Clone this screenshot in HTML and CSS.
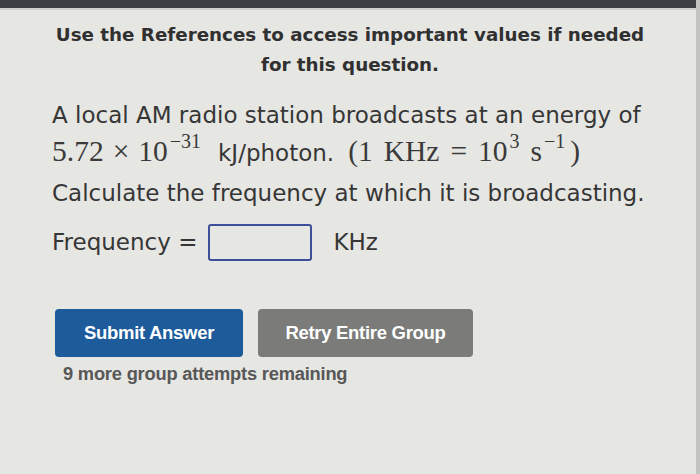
FILE: index.html
```html
<!DOCTYPE html>
<html>
<head>
<meta charset="utf-8">
<link rel="stylesheet" href="styles.css">
</head>
<body>
<div class="topbar"></div>
<div class="page">
  <div class="refs">Use the References to access important values if needed<br>for this question.</div>
  <div class="q">
    <p class="line">A local AM radio station broadcasts at an energy of</p>
    <p class="line mline"><span class="m">5.72<span class="op">×</span>10<sup>−31</sup></span><span class="sans">kJ/photon.</span><span class="m paren">(1<span class="sp"></span>KHz<span class="op">=</span>10<sup>3</sup><span class="sp"></span>s<sup>−1</sup><span class="sp2"></span>)</span></p>
    <p class="line calc">Calculate the frequency at which it is broadcasting.</p>
    <div class="answer">
      <span>Frequency =</span>
      <span class="box"></span>
      <span class="unit">KHz</span>
    </div>
  </div>
  <div class="buttons">
    <div class="btn submit">Submit Answer</div>
    <div class="btn retry">Retry Entire Group</div>
  </div>
  <div class="remaining">9 more group attempts remaining</div>
</div>
</body>
</html>
```
FILE: styles.css
```css
html, body {
  margin: 0;
  padding: 0;
}
body {
  width: 700px;
  height: 474px;
  overflow: hidden;
  background: #e6e6e3;
  color: #363636;
  font-family: "DejaVu Sans", Verdana, sans-serif;
  border-right: 4px solid #c4c4c2;
  box-sizing: border-box;
}
.topbar {
  height: 8px;
  background: #3c3f43;
  border-bottom: 2px solid #d0d0ce;
}
.page {
  padding: 0 0 0 52px;
}
.refs {
  margin-top: 10px;
  width: 596px;
  text-align: center;
  font-weight: bold;
  font-size: 18.3px;
  line-height: 30px;
  color: #303030;
}
.q {
  margin-top: 17px;
}
.line {
  margin: 0;
  font-size: 23px;
  line-height: 36px;
  white-space: nowrap;
}
.mline {
  display: flex;
  align-items: baseline;
}
.m {
  font-family: "Liberation Serif", "Times New Roman", serif;
  font-size: 29.5px;
  color: #3a3a3a;
}
.m sup {
  font-size: 20px;
  vertical-align: 13px;
  line-height: 0;
  margin-left: 2px;
}
.op {
  margin: 0 9px;
}
.paren .op {
  margin: 0 11px;
}
.sp {
  display: inline-block;
  width: 11px;
}
.sp2 {
  display: inline-block;
  width: 5px;
}
.sans {
  margin-left: 17px;
}
.paren {
  margin-left: 14px;
}
.calc {
  margin-top: 4px;
}
.answer {
  display: flex;
  align-items: center;
  margin-top: 12px;
  font-size: 23px;
  height: 38px;
}
.box {
  display: inline-block;
  width: 100px;
  height: 33px;
  border: 2px solid #3c4f98;
  border-radius: 3px;
  margin-left: 11px;
}
.unit {
  margin-left: 21px;
}
.buttons {
  display: flex;
  gap: 15px;
  margin-top: 48px;
  margin-left: 3px;
}
.btn {
  height: 48px;
  display: flex;
  align-items: center;
  justify-content: center;
  border-radius: 4px;
  color: #fff;
  font-family: "Liberation Sans", Arial, sans-serif;
  font-weight: bold;
  font-size: 18.5px;
  letter-spacing: -0.3px;
}
.submit {
  width: 188px;
  background: #1d5b9b;
}
.retry {
  width: 215px;
  background: #7b7b79;
}
.remaining {
  margin-top: 6px;
  margin-left: 11px;
  font-family: "Liberation Sans", Arial, sans-serif;
  font-weight: bold;
  font-size: 18.3px;
  color: #575757;
  letter-spacing: -0.2px;
}
```
